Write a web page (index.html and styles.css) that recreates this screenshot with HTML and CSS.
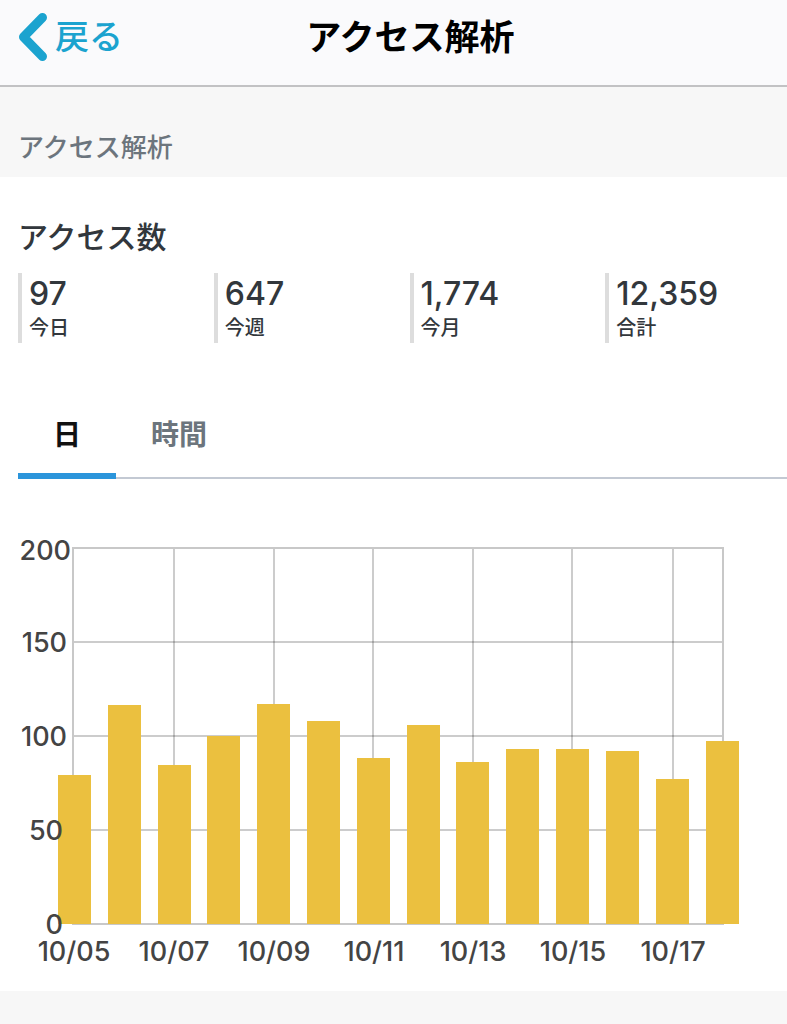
FILE: index.html
```html
<!DOCTYPE html>
<html lang="ja">
<head>
    <meta charset="UTF-8">
    <meta name="viewport" content="width=device-width, initial-scale=1.0">
    <title>アクセス解析</title>
    <link rel="stylesheet" href="styles.css">
</head>
<body>

    <header class="navbar">
        <a href="#" class="back">
            <svg class="back-icon" width="30" height="50" viewBox="0 0 30 50" aria-hidden="true">
                <path d="M24.5 5.5 L5.5 25 L24.5 44.5" fill="none" stroke="#1ba3cf" stroke-width="9" stroke-linecap="round" stroke-linejoin="round"/>
            </svg>
            <span>戻る</span>
        </a>
        <h1>アクセス解析</h1>
    </header>

    <div class="section-title">アクセス解析</div>

    <main class="content">
        <h2>アクセス数</h2>
        <div class="stats">
            <div class="stat">
                <span class="value">97</span>
                <span class="label">今日</span>
            </div>
            <div class="stat">
                <span class="value">647</span>
                <span class="label">今週</span>
            </div>
            <div class="stat">
                <span class="value">1,774</span>
                <span class="label">今月</span>
            </div>
            <div class="stat">
                <span class="value">12,359</span>
                <span class="label">合計</span>
            </div>
        </div>

        <div class="tabs" role="tablist">
            <button type="button" class="tab active" role="tab" aria-selected="true">日</button>
            <button type="button" class="tab" role="tab" aria-selected="false">時間</button>
        </div>

        <svg class="chart" viewBox="0 0 787 512" role="img" aria-label="アクセス数">
            <!-- Grid -->
            <g class="grid">
                <path d="M73 163H723 M73 257H723 M73 351H723"/>
                <path d="M174 69V445 M274 69V445 M373 69V445 M473 69V445 M572 69V445 M673 69V445"/>
            </g>
            <rect class="frame" x="73" y="69" width="650" height="376"/>

            <!-- Bars -->
            <g class="bars">
                <rect x="58" y="296" width="33" height="149"/>
                <rect x="108" y="226" width="33" height="219"/>
                <rect x="158" y="286" width="33" height="159"/>
                <rect x="207" y="257" width="33" height="188"/>
                <rect x="257" y="225" width="33" height="220"/>
                <rect x="307" y="242" width="33" height="203"/>
                <rect x="357" y="279" width="33" height="166"/>
                <rect x="407" y="246" width="33" height="199"/>
                <rect x="456" y="283" width="33" height="162"/>
                <rect x="506" y="270" width="33" height="175"/>
                <rect x="556" y="270" width="33" height="175"/>
                <rect x="606" y="272" width="33" height="173"/>
                <rect x="656" y="300" width="33" height="145"/>
                <rect x="706" y="262" width="33" height="183"/>
            </g>

            <!-- Axis labels -->
            <g class="axis-y">
                <text x="71" y="81">200</text>
                <text x="67" y="173">150</text>
                <text x="67" y="267">100</text>
                <text x="63" y="361">50</text>
                <text x="63" y="455">0</text>
            </g>
            <g class="axis-x">
                <text x="74" y="482">10/05</text>
                <text x="174" y="482">10/07</text>
                <text x="274" y="482">10/09</text>
                <text x="374" y="482">10/11</text>
                <text x="473" y="482">10/13</text>
                <text x="573" y="482">10/15</text>
                <text x="673" y="482">10/17</text>
            </g>
        </svg>
    </main>

</body>
</html>
```

FILE: styles.css
```css
* {
    box-sizing: border-box;
}
body {
    margin: 0;
    min-height: 100vh;
    background-color: #f7f7f7;
    color: #32373c;
    font-family: Inter, "Noto Sans CJK JP", sans-serif;
}
.navbar {
    display: grid;
    grid-template-columns: 1fr auto 1fr;
    align-items: center;
    height: 87px;
    padding: 0 0 11px 18px;
    background-color: #fafafc;
    border-bottom: 2px solid #c2c2c4;
}
.back {
    display: flex;
    align-items: center;
    gap: 7px;
    color: #1ba3cf;
    font-size: 34px;
    font-weight: 500;
    line-height: 48px;
    text-decoration: none;
}
.navbar h1 {
    margin: 0;
    padding-left: 16px;
    color: #000;
    font-size: 35px;
    font-weight: 700;
    line-height: 48px;
}
.section-title {
    padding: 42px 18px 10px;
    color: #6c757d;
    font-size: 26px;
    font-weight: 500;
    line-height: 38px;
}
.content {
    padding-top: 40px;
    background-color: #fff;
}
.content h2 {
    margin: 0 18px 16px;
    font-size: 30px;
    font-weight: 500;
    line-height: 40px;
}
.stats {
    display: grid;
    grid-template-columns: repeat(4, 1fr);
    padding-right: 4px;
}
.stat {
    display: flex;
    flex-direction: column;
    height: 70px;
    margin-left: 18px;
    padding: 1px 0 0 7px;
    border-left: 4px solid #ddd;
}
.stat .value {
    font-size: 32px;
    font-weight: 500;
    line-height: 40px;
}
.stat .label {
    font-size: 20px;
    font-weight: 500;
    line-height: 28px;
}
.tabs {
    display: flex;
    margin: 50px 0 0 18px;
    box-shadow: inset 0 -2px #c3c9d3;
}
.tab {
    height: 86px;
    padding: 0 35px;
    border: none;
    border-bottom: 6px solid transparent;
    background: none;
    color: #6c757d;
    font-family: inherit;
    font-size: 28px;
    font-weight: 700;
    cursor: pointer;
}
.tab.active {
    color: #111;
    border-bottom-color: #2b95db;
}
.chart {
    display: block;
    width: 100%;
}
.grid path {
    fill: none;
    stroke: rgba(0, 0, 0, 0.2);
    stroke-width: 2;
}
.frame {
    fill: none;
    stroke: #c8c8c8;
    stroke-width: 2;
}
.bars rect {
    fill: #ebc03f;
}
.axis-x text,
.axis-y text {
    fill: #444;
    font-size: 27px;
    font-weight: 500;
}
.axis-x text {
    text-anchor: middle;
}
.axis-y text {
    text-anchor: end;
}
```
